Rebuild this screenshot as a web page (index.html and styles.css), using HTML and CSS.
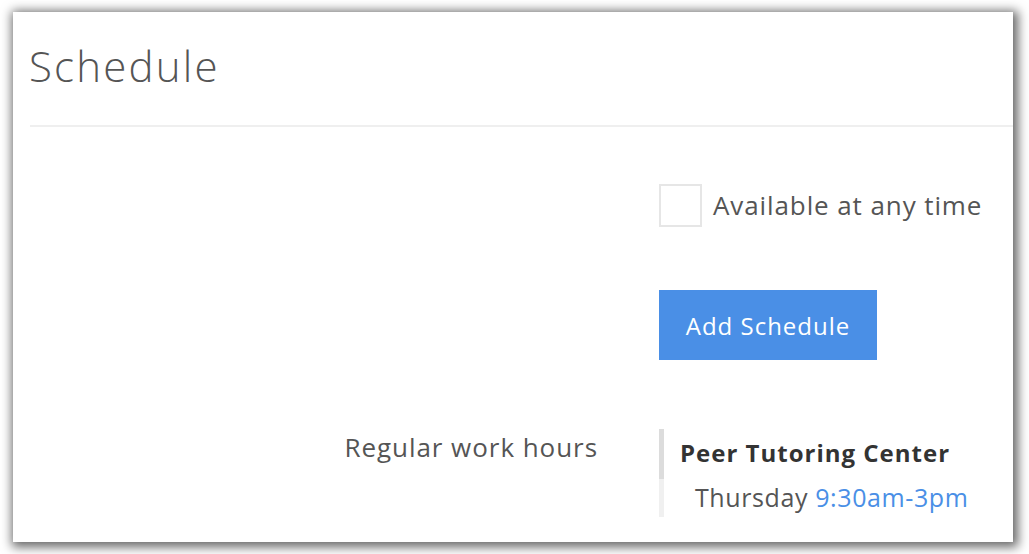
FILE: index.html
```html
<!DOCTYPE html>
<html>
<head>
<meta charset="utf-8">
<link rel="stylesheet" href="styles.css">
</head>
<body>
<div class="frame">
  <div class="card">
    <h1 class="title">Schedule</h1>
    <div class="divider"></div>
    <div class="form">
      <div class="label"></div>
      <div class="field check-row">
        <span class="checkbox"></span>
        <span class="check-label">Available at any time</span>
      </div>
      <div class="label"></div>
      <div class="field button-row">
        <button class="btn">Add Schedule</button>
      </div>
      <div class="label hours-label">Regular work hours</div>
      <div class="field hours">
        <div class="hours-title">Peer Tutoring Center</div>
        <div class="hours-line">Thursday <span class="time">9:30am-3pm</span></div>
      </div>
    </div>
  </div>
</div>
</body>
</html>
```
FILE: styles.css
```css
html, body {
  margin: 0;
  padding: 0;
  background: #fff;
}
body {
  width: 1029px;
  height: 554px;
  overflow: hidden;
  font-family: "Open Sans", "Noto Sans", sans-serif;
  color: #555;
}
.frame {
  padding: 12px 16px 12px 13px;
}
.card {
  background: #fff;
  width: 1000px;
  height: 530px;
  overflow: hidden;
  box-shadow: 2px 2px 10px 3px rgba(0, 0, 0, 0.6);
}
.title {
  margin: 0;
  padding: 26px 0 0 16px;
  font-size: 42px;
  font-weight: 300;
  line-height: 56px;
  letter-spacing: 2.2px;
  color: #555;
}
.divider {
  margin: 31px 0 0 17px;
  height: 2px;
  background: #efefef;
}
.form {
  display: grid;
  grid-template-columns: 585px 1fr;
  column-gap: 61px;
  padding-top: 56px;
}
.label {
  text-align: right;
  font-size: 26px;
  color: #555;
}
.check-row {
  display: flex;
  align-items: center;
  gap: 11px;
  height: 44px;
}
.checkbox {
  width: 39px;
  height: 39px;
  border: 2px solid #e6e6e6;
  box-sizing: content-box;
}
.check-label {
  font-size: 26px;
  letter-spacing: 0.9px;
  color: #555;
}
.button-row {
  padding-top: 63px;
}
.btn {
  font-family: inherit;
  width: 218px;
  height: 70px;
  border: none;
  background: #4a8fe6;
  color: #fff;
  font-size: 24px;
  letter-spacing: 1px;
  padding: 0;
}
.hours-label {
  padding-top: 69px;
  line-height: 36px;
  letter-spacing: 0.95px;
}
.field.hours {
  margin-top: 69px;
  border-left: 5px solid #f0f0f0;
  padding-left: 16px;
  position: relative;
}
.field.hours::before {
  content: "";
  position: absolute;
  left: -5px;
  top: 0;
  width: 5px;
  height: 50px;
  background: #dcdcdc;
}
.hours-title {
  font-size: 24px;
  font-weight: 700;
  color: #333;
  line-height: 48px;
  letter-spacing: 1px;
}
.hours-line {
  font-size: 25px;
  color: #555;
  padding-left: 15px;
  line-height: 40px;
  letter-spacing: 0.6px;
}
.time {
  color: #4a8fe6;
}
```
